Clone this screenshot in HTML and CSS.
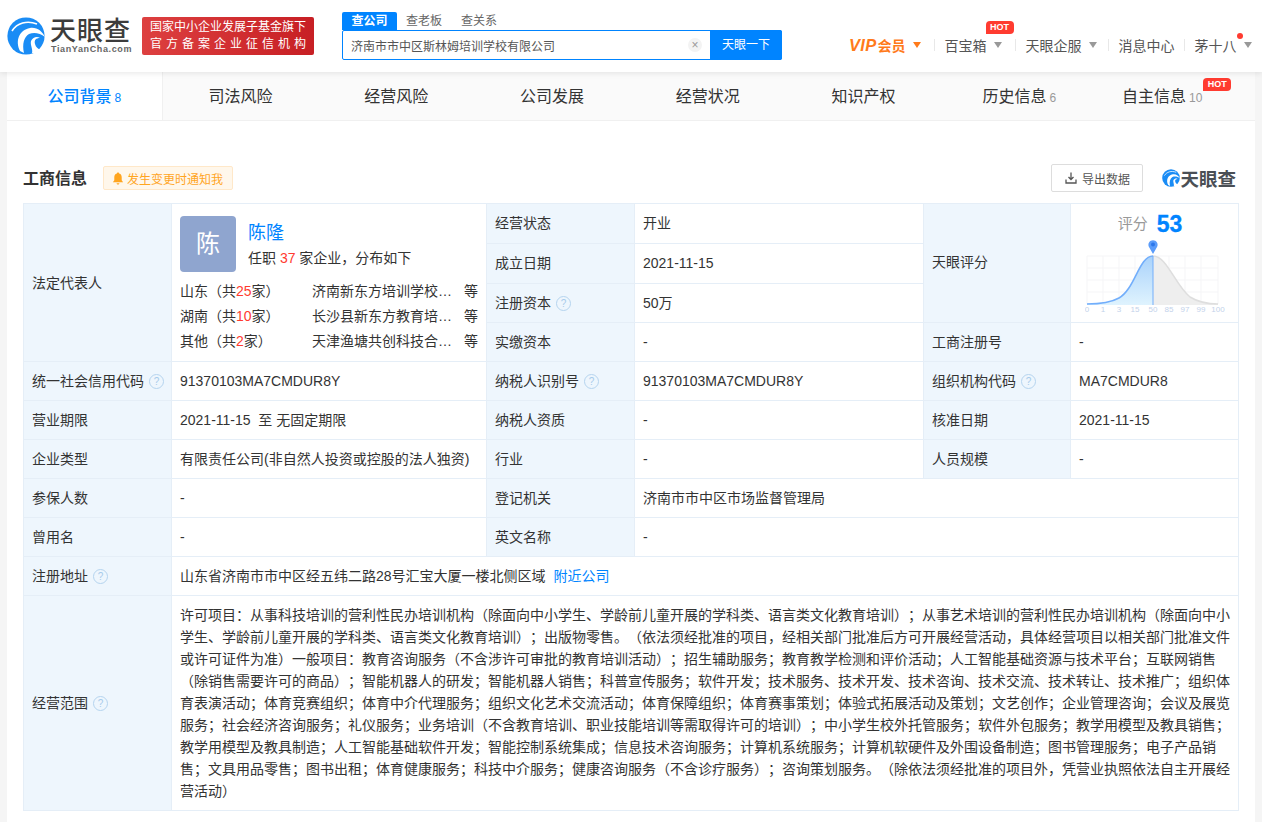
FILE: index.html
```html
<!DOCTYPE html>
<html lang="zh-CN">
<head>
<meta charset="utf-8">
<title>工商信息</title>
<link rel="stylesheet" href="styles.css">
</head>
<body>
<svg class="defs" width="0" height="0" aria-hidden="true">
  <symbol id="eye" viewBox="0 0 38 38">
    <circle cx="19" cy="19" r="18.6" fill="#1a8cf5"/>
    <path d="M5 14C10 6 20 3 30 7" fill="none" stroke="#fff" stroke-width="1.6"/>
    <path d="M13 34C8 24 12 13 23 11C30 10 35 14 38 20C33 16 27 15 22 17C17 20 15 27 17 36Z" fill="#fff"/>
    <path d="M24 24C26 20 30 19 33 21C29 21 27 23 28 27C29 31 32 33 35 32C32 36 28 37 25 36C26 32 23 28 24 24Z" fill="#fff"/>
  </symbol>
</svg>

<header class="topbar">
  <div class="brand">
    <svg class="brand-eye"><use href="#eye"/></svg>
    <div class="brand-text">
      <div class="brand-cn">天眼查</div>
      <div class="brand-en">TianYanCha.com</div>
    </div>
  </div>
  <div class="gov-badge">
    <div>国家中小企业发展子基金旗下</div>
    <div class="gov-second">官方备案企业征信机构</div>
  </div>
  <div class="search">
    <div class="search-tabs">
      <span class="search-tab active">查公司</span>
      <span class="search-tab">查老板</span>
      <span class="search-tab">查关系</span>
    </div>
    <div class="search-box">
      <div class="search-input">济南市市中区斯林姆培训学校有限公司</div>
      <span class="search-clear">×</span>
      <div class="search-btn">天眼一下</div>
    </div>
  </div>
  <nav class="topnav">
    <span class="vip"><i>VIP</i>会员<b class="tri tri-orange"></b></span>
    <span class="sep"></span>
    <span class="nav-item nav-box">百宝箱<b class="tri"></b><em class="hot hot-nav">HOT</em></span>
    <span class="sep"></span>
    <span class="nav-item">天眼企服<b class="tri"></b></span>
    <span class="sep"></span>
    <span class="nav-item nav-msg">消息中心</span>
    <span class="sep"></span>
    <span class="nav-item user">茅十八<u class="dot"></u><b class="tri"></b></span>
  </nav>
</header>

<main class="page">
  <div class="tabs">
    <div class="tab active">公司背景<small>8</small></div>
    <div class="tab">司法风险</div>
    <div class="tab">经营风险</div>
    <div class="tab">公司发展</div>
    <div class="tab">经营状况</div>
    <div class="tab">知识产权</div>
    <div class="tab">历史信息<small>6</small></div>
    <div class="tab tab-hot">自主信息<small>10</small><em class="hot hot-tab">HOT</em></div>
  </div>

  <section class="section">
    <div class="section-head">
      <h2 class="section-title">工商信息</h2>
      <div class="notify">
        <svg class="bell" viewBox="0 0 12 14"><path d="M6 0.5C6.8 0.5 7.2 1 7.2 1.6C9.4 2.2 10 4 10 6V9L11.5 11H0.5L2 9V6C2 4 2.6 2.2 4.8 1.6C4.8 1 5.2 0.5 6 0.5ZM4.5 12H7.5C7.5 13 6.8 13.5 6 13.5S4.5 13 4.5 12Z" fill="#ffa51f"/></svg>
        发生变更时通知我
      </div>
      <div class="head-right">
        <div class="export">
          <svg class="export-icon" viewBox="0 0 12 12"><path d="M6 0.5V7.5M3.5 5L6 7.5L8.5 5M1 7.5V11H11V7.5" fill="none" stroke="#555" stroke-width="1.3"/></svg>
          导出数据
        </div>
        <div class="mini-logo">
          <svg class="mini-eye"><use href="#eye"/></svg><span>天眼查</span>
        </div>
      </div>
    </div>

    <table class="info">
      <colgroup>
        <col class="c1"><col class="c2"><col class="c3"><col class="c4"><col class="c5"><col class="c6">
      </colgroup>
      <tbody>
        <tr class="tall">
          <th rowspan="4">法定代表人</th>
          <td rowspan="4" class="rep">
            <div class="rep-top">
              <div class="avatar">陈</div>
              <div>
                <div class="rep-name">陈隆</div>
                <div class="rep-desc">任职 <span class="red">37</span> 家企业，分布如下</div>
              </div>
            </div>
            <div class="rep-row"><span class="rep-area">山东（共<span class="red">25</span>家）</span><span class="rep-co">济南新东方培训学校…</span><span>等</span></div>
            <div class="rep-row"><span class="rep-area">湖南（共<span class="red">10</span>家）</span><span class="rep-co">长沙县新东方教育培…</span><span>等</span></div>
            <div class="rep-row"><span class="rep-area">其他（共<span class="red">2</span>家）</span><span class="rep-co">天津渔塘共创科技合…</span><span>等</span></div>
          </td>
          <th class="up">经营状态</th>
          <td class="up">开业</td>
          <th rowspan="3" class="up">天眼评分</th>
          <td rowspan="3" class="score">
            <div class="score-head">评分<strong>53</strong></div>
            <svg class="chart" viewBox="0 0 140 76">
              <defs>
                <linearGradient id="fillBlue" x1="0" y1="0" x2="0" y2="1">
                  <stop offset="0" stop-color="#a9d2fb"/>
                  <stop offset="1" stop-color="#dff3fe"/>
                </linearGradient>
              </defs>
              <g stroke="#f5f5f7" stroke-width="1" fill="none">
                <path d="M2 16H133M2 28H133M2 40H133M2 52H133M2 64H133"/>
                <path d="M2 16V64M18 16V64M34 16V64M50 16V64M68 16V64M84 16V64M100 16V64M116 16V64M133 16V64"/>
              </g>
              <path d="M68 16C82 16 90 45 105 57C113 62 124 64 133 64V65H68Z" fill="#eeeeee"/>
              <path d="M68 16C82 16 90 45 105 57C113 62 124 64 133 64" fill="none" stroke="#dedede" stroke-width="1.5"/>
              <path d="M2 64C15 64 25 63 34 58C50 49 54 16 68 16V65H2Z" fill="url(#fillBlue)"/>
              <path d="M2 64C15 64 25 63 34 58C50 49 54 16 68 16" fill="none" stroke="#72aefb" stroke-width="1.6"/>
              <path d="M68 16V65" stroke="#72aefb" stroke-width="1"/>
              <path d="M68 14L64 7A4.6 4.6 0 1 1 72 7Z" fill="#5b9cfa"/>
              <circle cx="68" cy="4.6" r="2" fill="#2d77ea"/>
              <g class="chart-labels">
                <text x="2" y="72">0</text><text x="18" y="72">1</text><text x="34" y="72">3</text><text x="50" y="72">15</text><text x="68" y="72">50</text><text x="84" y="72">85</text><text x="100" y="72">97</text><text x="116" y="72">99</text><text x="133" y="72">100</text>
              </g>
            </svg>
          </td>
        </tr>
        <tr class="tall"><th class="up">成立日期</th><td class="up">2021-11-15</td></tr>
        <tr><th>注册资本<span class="help">?</span></th><td>50万</td></tr>
        <tr><th>实缴资本</th><td>-</td><th>工商注册号</th><td>-</td></tr>
        <tr>
          <th>统一社会信用代码<span class="help">?</span></th><td>91370103MA7CMDUR8Y</td>
          <th>纳税人识别号<span class="help">?</span></th><td>91370103MA7CMDUR8Y</td>
          <th>组织机构代码<span class="help">?</span></th><td>MA7CMDUR8</td>
        </tr>
        <tr>
          <th>营业期限</th><td>2021-11-15&nbsp; 至 无固定期限</td>
          <th>纳税人资质</th><td>-</td>
          <th>核准日期</th><td>2021-11-15</td>
        </tr>
        <tr>
          <th>企业类型</th><td>有限责任公司(非自然人投资或控股的法人独资)</td>
          <th>行业</th><td>-</td>
          <th>人员规模</th><td>-</td>
        </tr>
        <tr>
          <th>参保人数</th><td>-</td>
          <th>登记机关</th><td colspan="3">济南市市中区市场监督管理局</td>
        </tr>
        <tr>
          <th>曾用名</th><td>-</td>
          <th>英文名称</th><td colspan="3">-</td>
        </tr>
        <tr>
          <th>注册地址<span class="help">?</span></th>
          <td colspan="5">山东省济南市市中区经五纬二路28号汇宝大厦一楼北侧区域<a class="near">附近公司</a></td>
        </tr>
        <tr>
          <th>经营范围<span class="help">?</span></th>
          <td colspan="5" class="scope">许可项目：从事科技培训的营利性民办培训机构（除面向中小学生、学龄前儿童开展的学科类、语言类文化教育培训）；从事艺术培训的营利性民办培训机构（除面向中小学生、学龄前儿童开展的学科类、语言类文化教育培训）；出版物零售。（依法须经批准的项目，经相关部门批准后方可开展经营活动，具体经营项目以相关部门批准文件或许可证件为准）一般项目：教育咨询服务（不含涉许可审批的教育培训活动）；招生辅助服务；教育教学检测和评价活动；人工智能基础资源与技术平台；互联网销售（除销售需要许可的商品）；智能机器人的研发；智能机器人销售；科普宣传服务；软件开发；技术服务、技术开发、技术咨询、技术交流、技术转让、技术推广；组织体育表演活动；体育竞赛组织；体育中介代理服务；组织文化艺术交流活动；体育保障组织；体育赛事策划；体验式拓展活动及策划；文艺创作；企业管理咨询；会议及展览服务；社会经济咨询服务；礼仪服务；业务培训（不含教育培训、职业技能培训等需取得许可的培训）；中小学生校外托管服务；软件外包服务；教学用模型及教具销售；教学用模型及教具制造；人工智能基础软件开发；智能控制系统集成；信息技术咨询服务；计算机系统服务；计算机软硬件及外围设备制造；图书管理服务；电子产品销售；文具用品零售；图书出租；体育健康服务；科技中介服务；健康咨询服务（不含诊疗服务）；咨询策划服务。（除依法须经批准的项目外，凭营业执照依法自主开展经营活动）</td>
        </tr>
      </tbody>
    </table>
  </section>
</main>
</body>
</html>
```
FILE: styles.css
```css
* { box-sizing: border-box; }
html, body { margin: 0; padding: 0; }
body {
  background: #f5f5f5;
  color: #333;
  font-family: "Liberation Sans", "Noto Sans CJK SC", sans-serif;
  font-size: 14px;
  height: 822px;
  overflow: hidden;
  text-spacing-trim: space-all;
}
.defs { position: absolute; }

/* top bar */
.topbar {
  height: 72px;
  width: 1262px;
  background: #fff;
  box-shadow: 0 1px 6px rgba(0, 0, 0, 0.1);
  display: flex;
  padding-left: 7px;
  position: relative;
  z-index: 2;
}
.topbar > * { flex: none; }
.brand { display: flex; margin-top: 17px; width: 135px; height: 38px; }
.brand-eye { width: 38px; height: 38px; }
.brand-text { margin-left: 5px; color: #3c3c3c; }
.brand-cn { font-size: 26px; line-height: 26px; font-weight: 500; letter-spacing: 1px; white-space: nowrap; margin-top: 1px; }
.brand-en { font-size: 9px; line-height: 11px; font-weight: 700; color: #666; letter-spacing: 0.62px; white-space: nowrap; margin-left: 1px; }
.gov-badge {
  margin-top: 17px;
  width: 172px;
  height: 38px;
  border-radius: 2px;
  background: linear-gradient(90deg, #dd4040, #c71f24);
  color: #fff;
  font-size: 12px;
  line-height: 17px;
  padding: 2px 0 0 8px;
  white-space: nowrap;
}
.gov-second { letter-spacing: 4px; }
.search { margin-left: 28px; margin-top: 12px; width: 440px; }
.search-tabs { display: flex; height: 18px; font-size: 12px; color: #666; }
.search-tab { margin-right: 19px; line-height: 18px; }
.search-tab.active {
  background: #0084ff;
  color: #fff;
  width: 55px;
  margin-right: 9px;
  text-align: center;
  font-weight: 700;
  border-radius: 2px 2px 0 0;
}
.search-box {
  display: flex;
  align-items: center;
  height: 30px;
  border: 1px solid #0084ff;
  border-radius: 2px;
}
.search-input { flex: 1; padding-left: 8px; font-size: 12px; color: #555; }
.search-clear {
  width: 14px; height: 14px; margin-right: 8px; border-radius: 50%;
  background: #f3f3f3; color: #999; font-size: 12px; line-height: 14px; text-align: center;
}
.search-btn {
  width: 72px; height: 30px; margin-right: -1px; background: #0084ff; color: #fff;
  font-size: 12px; line-height: 30px; text-align: center; border-radius: 0 2px 2px 0;
}
.topnav {
  position: relative;
  display: flex;
  align-items: center;
  margin-left: 67px;
  height: 16px;
  margin-top: 37px;
  color: #555;
  font-size: 14px;
  white-space: nowrap;
}
.vip { color: #ff7a1a; font-weight: 700; font-size: 14px; display: flex; align-items: center; margin-right: 13px; }
.vip i { font-size: 16.5px; letter-spacing: 0.3px; margin-right: 1px; }
.nav-item { position: relative; display: flex; align-items: center; margin: 0 11px 0 10px; }
.nav-box { margin-right: 13px; }
.nav-msg { margin-right: 9px; }
.sep { width: 1px; height: 12px; background: #e8e8e8; }
.tri { display: block; width: 0; height: 0; border: 4.5px solid transparent; border-top: 6px solid #999; border-bottom: 0; margin-left: 7px; }
.tri-orange { border-top-color: #ff7a1a; }
.user .dot { position: absolute; left: 42px; top: -2px; width: 6px; height: 6px; border-radius: 50%; background: #ff3b30; }
.hot {
  position: absolute;
  width: 28px; height: 13px;
  background: #ff3b30; color: #fff;
  font-size: 9px; font-style: normal; font-weight: 700;
  line-height: 13px; text-align: center;
  border-radius: 4px 4px 4px 0;
}
.hot-nav { left: 41px; top: -14px; }
.hot-tab { left: 106px; top: 6px; }

/* page */
.page { margin: 0 7px; width: 1248px; height: 750px; background: #fff; }
.tabs { display: flex; height: 49px; background: #fafafa; border-bottom: 1px solid #f0f0f0; }
.tab { flex: none; width: 155.75px; text-align: center; font-size: 16px; line-height: 50px; color: #333; white-space: nowrap; }
.tab.active { background: #fff; color: #0084ff; font-weight: 500; border-right: 1px solid #f0f0f0; }
.tab small { font-size: 12px; color: #999; margin-left: 3px; }
.tab.active small { color: #0084ff; }
.tab-hot { position: relative; padding-right: 26px; }
.section { padding: 44px 16px 0; }
.section-head { display: flex; align-items: center; height: 28px; margin-bottom: 10px; }
.section-title { margin: 0; font-size: 16px; font-weight: 700; color: #333; line-height: 28px; }
.notify {
  display: flex; align-items: center;
  margin: 0 0 2px 16px; width: 130px; height: 24px;
  padding-left: 8px;
  border: 1px solid #ffe8c9; background: #fff7eb; color: #ffa51f;
  border-radius: 2px; font-size: 12px;
}
.bell { width: 12px; height: 13px; margin-right: 3px; }
.head-right { margin-left: auto; display: flex; align-items: center; padding-right: 3px; margin-bottom: 2px; }
.export {
  display: flex; align-items: center; justify-content: center;
  flex: none; width: 92px; height: 28px; border: 1px solid #ddd; border-radius: 2px;
  font-size: 12px; color: #555;
}
.export-icon { width: 12px; height: 12px; margin-right: 5px; }
.mini-logo { display: flex; align-items: center; margin-left: 19px; font-size: 18.5px; font-weight: 700; color: #4a4f55; white-space: nowrap; }
.mini-eye { width: 18px; height: 18px; }

/* table */
.info { width: 1215px; table-layout: fixed; border-collapse: collapse; font-size: 14px; }
.c1 { width: 148px; } .c2 { width: 315px; } .c3 { width: 148px; }
.c4 { width: 289px; } .c5 { width: 147px; } .c6 { width: 168px; }
.info th, .info td { border: 1px solid #e5eef7; padding: 0 8px; height: 39px; line-height: 22px; color: #333; text-align: left; font-weight: 400; vertical-align: middle; }
.info .tall th, .info .tall td { height: 40px; }
.info th.up, .info td.up { padding-bottom: 2px; }
.info th { background: #eef6fd; white-space: nowrap; }
.help {
  display: inline-block; width: 15px; height: 15px; margin-left: 5px;
  border: 1px solid #b5d4ef; border-radius: 50%; color: #a6cbeb;
  font-size: 10px; line-height: 13px; text-align: center; vertical-align: 1px;
}
.red { color: #ff3b30; }
.info td.rep { padding: 12px 8px 3px; vertical-align: top; }
.rep-top { display: flex; margin-bottom: 7px; }
.avatar {
  width: 56px; height: 56px; margin-right: 12px; border-radius: 4px;
  background: #8fa5cf; color: #fff; font-size: 24px; line-height: 56px; text-align: center;
}
.rep-name { font-size: 18px; line-height: 24px; color: #0084ff; margin-top: 5px; }
.rep-desc { line-height: 22px; margin-top: 2px; }
.rep-row { display: flex; height: 25px; line-height: 25px; }
.rep-area { width: 132px; flex: none; white-space: nowrap; }
.rep-co { width: 152px; flex: none; white-space: nowrap; }
.info td.score { padding: 0; vertical-align: top; }
.score-head { display: flex; justify-content: center; align-items: center; height: 36px; font-size: 15px; color: #999; padding-right: 9px; padding-top: 4px; }
.score-head strong { color: #0084ff; font-size: 23px; font-weight: 700; margin-left: 9px; -webkit-text-stroke: 0.3px #0084ff; }
.chart { display: block; width: 140px; height: 76px; margin: 0 0 0 14px; }
.chart-labels { fill: #c3d2ea; font-size: 8px; text-anchor: middle; }
.near { color: #0084ff; margin-left: 8px; }
.info td.scope { padding: 8px; height: 214px; }
```
